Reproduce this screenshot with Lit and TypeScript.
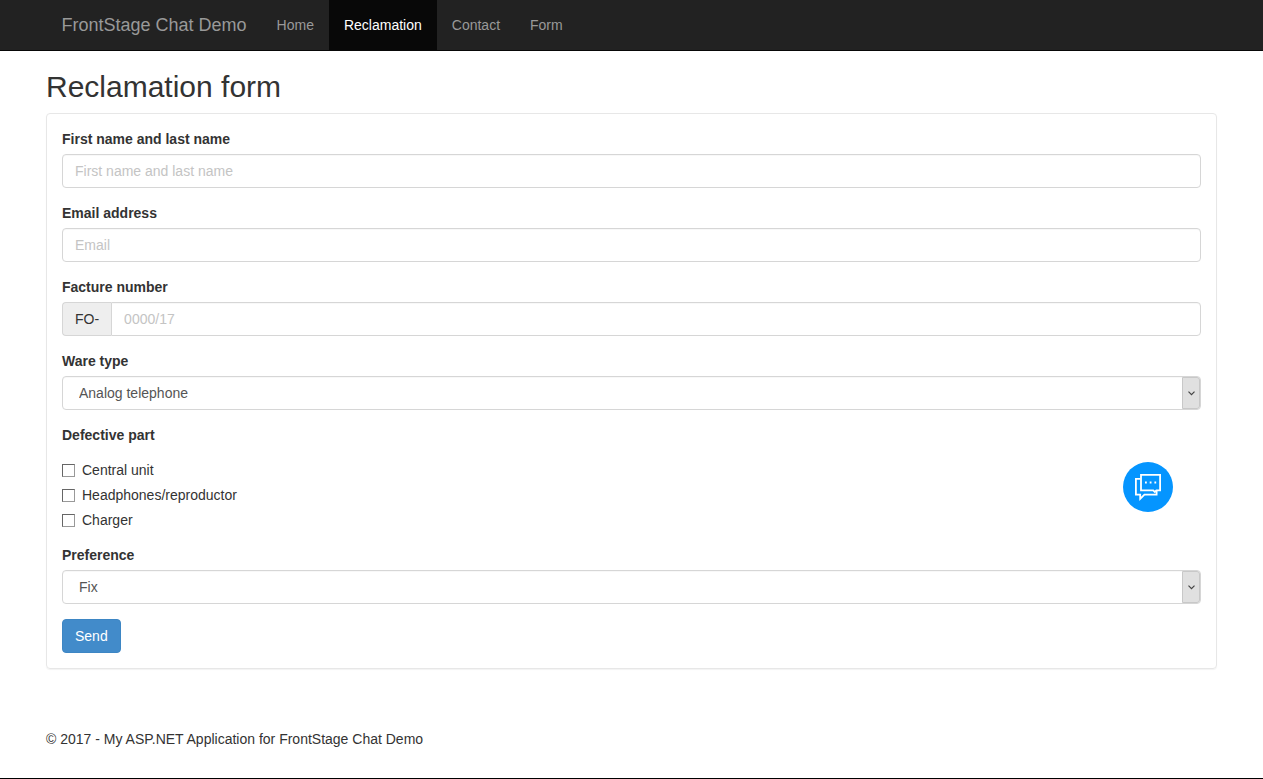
import { LitElement, html, css } from "lit";
import { customElement, property } from "lit/decorators.js";

@customElement("site-nav")
export class SiteNav extends LitElement {
  @property() active = "Reclamation";

  static styles = css`
    :host {
      display: block;
      background: #222;
      border-bottom: 1px solid #080808;
    }
    .bar {
      display: flex;
      max-width: 1170px;
      margin: 0 auto;
      line-height: 20px;
    }
    a {
      padding: 15px;
      color: #999;
      text-decoration: none;
    }
    .brand {
      font-size: 18px;
    }
    .current {
      color: #fff;
      background: #080808;
    }
  `;

  render() {
    return html`<nav class="bar">
      <a class="brand" href="#">FrontStage Chat Demo</a>
      ${["Home", "Reclamation", "Contact", "Form"].map(
        (name) =>
          html`<a class=${name === this.active ? "current" : ""} href="#">${name}</a>`
      )}
    </nav>`;
  }
}

@customElement("app-root")
export class AppRoot extends LitElement {
  static styles = css`
    *,
    :host {
      box-sizing: border-box;
    }
    :host {
      display: flex;
      flex-direction: column;
      min-height: 100vh;
      border-bottom: 1px solid #000;
      background: #fff;
      color: #333;
      font-family: "Liberation Sans", Arial, sans-serif;
      font-size: 14px;
      line-height: 20px;
    }
    .container {
      width: 100%;
      max-width: 1171px;
      margin: 0 auto;
    }
    h2 {
      margin: 19px 0 10px;
      font-size: 30px;
      font-weight: 500;
      line-height: 33px;
    }
    .panel {
      padding: 15px;
      border: 1px solid #e7e7e7;
      border-radius: 4px;
      box-shadow: 0 1px 1px rgba(0, 0, 0, 0.05);
    }
    .group {
      margin-bottom: 15px;
    }
    .title {
      display: block;
      margin-bottom: 5px;
      font-weight: bold;
    }
    fieldset {
      min-width: 0;
      margin: 0;
      padding: 0;
      border: 0;
    }
    legend {
      padding: 0;
    }
    .control {
      display: block;
      width: 100%;
      height: 34px;
      margin: 0;
      padding: 6px 12px;
      border: 1px solid #d6d6d6;
      border-radius: 4px;
      background: #fff;
      box-shadow: inset 0 1px 1px rgba(0, 0, 0, 0.03);
      color: #555;
      font: inherit;
    }
    .control::placeholder {
      color: #c4c4c4;
      opacity: 1;
    }
    .addon-row {
      display: flex;
    }
    .addon {
      padding: 6px 12px;
      border: 1px solid #d6d6d6;
      border-right: 0;
      border-radius: 4px 0 0 4px;
      background: #eee;
    }
    .addon-row .control {
      flex: 1;
      border-radius: 0 4px 4px 0;
    }
    .select {
      display: grid;
      grid-template-columns: 1fr 19px;
    }
    .select .control {
      grid-area: 1 / 1 / 2 / 3;
      padding: 6px 16px;
      appearance: none;
    }
    .arrow {
      grid-area: 1 / 2;
      display: grid;
      place-items: center;
      margin: 1px 1px 1px 0;
      border: 1px solid #c8c8c8;
      border-radius: 0 3px 3px 0;
      background: #e0e0e0;
      pointer-events: none;
    }
    .check {
      display: flex;
      align-items: center;
      gap: 7px;
      margin-top: 5px;
    }
    .check:first-of-type {
      margin-top: 10px;
    }
    .check input {
      width: 13px;
      height: 13px;
      margin: 0;
      appearance: none;
      border: 1px solid #666;
      border-right-color: #999;
      border-bottom-color: #999;
      background: #fff;
    }
    .check input:checked {
      background: #428bca;
    }
    .send {
      display: block;
      height: 34px;
      padding: 6px 12px;
      border: 1px solid #3d86c4;
      border-radius: 4px;
      background: #428bca;
      color: #fff;
      font: inherit;
    }
    .chat {
      position: fixed;
      right: 90px;
      top: 462px;
      width: 50px;
      height: 50px;
      padding: 0;
      border: 0;
      border-radius: 50%;
      background: #0595ff;
    }
    .chat svg {
      display: block;
    }
    footer {
      padding: 60px 0 20px;
    }
  `;

  private select(id: string, label: string, options: string[]) {
    return html`<div class="group">
      <label class="title" for=${id}>${label}</label>
      <div class="select">
        <select class="control" id=${id}>
          ${options.map((o) => html`<option>${o}</option>`)}
        </select>
        <span class="arrow">
          <svg width="7" height="5" viewBox="0 0 7 5" fill="none" stroke="#444" stroke-width="1.2">
            <path d="M.5.7 3.5 3.7 6.5.7" />
          </svg>
        </span>
      </div>
    </div>`;
  }

  render() {
    return html`
      <site-nav></site-nav>
      <main class="container">
        <h2>Reclamation form</h2>
        <form class="panel" @submit=${(e: Event) => e.preventDefault()}>
          <div class="group">
            <label class="title" for="name">First name and last name</label>
            <input class="control" id="name" type="text" placeholder="First name and last name" />
          </div>
          <div class="group">
            <label class="title" for="email">Email address</label>
            <input class="control" id="email" type="email" placeholder="Email" />
          </div>
          <div class="group">
            <label class="title" for="facture">Facture number</label>
            <div class="addon-row">
              <span class="addon">FO-</span>
              <input class="control" id="facture" type="text" placeholder="0000/17" />
            </div>
          </div>
          ${this.select("ware", "Ware type", ["Analog telephone"])}
          <fieldset class="group">
            <legend class="title">Defective part</legend>
            ${["Central unit", "Headphones/reproductor", "Charger"].map(
              (part) => html`<label class="check"><input type="checkbox" />${part}</label>`
            )}
          </fieldset>
          ${this.select("preference", "Preference", ["Fix"])}
          <button class="send" type="submit">Send</button>
        </form>
      </main>
      <footer class="container">© 2017 - My ASP.NET Application for FrontStage Chat Demo</footer>
      <button class="chat" type="button" aria-label="Open chat">
        <svg width="50" height="50" viewBox="0 0 50 50" fill="none" stroke="#fff" stroke-width="1.8">
          <path d="M18 12.9H37.1V28.4H33.4L31.8 30 30.2 28.4H18Z" />
          <path d="M17.5 16.9H12.9V32.6H17.2V36.8L21.4 32.6H33.6V28.6" />
          <path d="M22 20.5h1.8M26.7 20.5h1.8M31.4 20.5h1.8" />
        </svg>
      </button>
    `;
  }
}
